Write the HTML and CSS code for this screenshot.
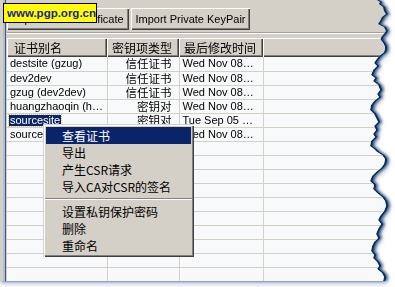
FILE: index.html
```html
<!DOCTYPE html>
<html lang="zh-CN">
<head>
  <meta charset="UTF-8" />
  <title>证书管理</title>
  <link rel="stylesheet" href="styles.css">
</head>
<body>
  <div class="shot">
    <!-- torn window with shadow -->
    <div class="frame">
      <div class="window">
        <div class="side"></div>
        <div class="main">
          <div class="toolbar">
            <button class="btn btn-trust">Import Trust Certificate</button>
            <button class="btn btn-pair">Import Private KeyPair</button>
          </div>
          <div class="sep"></div>
          <div class="list">
            <table class="grid">
              <colgroup>
                <col class="c-alias">
                <col class="c-type">
                <col class="c-date">
                <col class="c-rest">
              </colgroup>
              <thead>
                <tr>
                  <th>证书别名</th>
                  <th>密钥项类型</th>
                  <th>最后修改时间</th>
                  <th></th>
                </tr>
              </thead>
              <tbody>
                <tr><td>destsite (gzug)</td><td class="zh">信任证书</td><td>Wed Nov 08…</td><td></td></tr>
                <tr><td>dev2dev</td><td class="zh">信任证书</td><td>Wed Nov 08…</td><td></td></tr>
                <tr><td>gzug (dev2dev)</td><td class="zh">信任证书</td><td>Wed Nov 08…</td><td></td></tr>
                <tr><td>huangzhaoqin (h…</td><td class="zh">密钥对</td><td>Wed Nov 08…</td><td></td></tr>
                <tr><td><span class="picked">sourcesite</span></td><td class="zh">密钥对</td><td>Tue Sep 05 …</td><td></td></tr>
                <tr><td>sourcesite2</td><td class="zh">密钥对</td><td>Wed Nov 08…</td><td></td></tr>
                <tr><td></td><td></td><td></td><td></td></tr>
                <tr><td></td><td></td><td></td><td></td></tr>
                <tr><td></td><td></td><td></td><td></td></tr>
                <tr><td></td><td></td><td></td><td></td></tr>
                <tr><td></td><td></td><td></td><td></td></tr>
                <tr><td></td><td></td><td></td><td></td></tr>
                <tr><td></td><td></td><td></td><td></td></tr>
                <tr><td></td><td></td><td></td><td></td></tr>
                <tr><td></td><td></td><td></td><td></td></tr>
                <tr><td></td><td></td><td></td><td></td></tr>
              </tbody>
            </table>
          </div>
        </div>
      </div>
    </div>

    <!-- watermark -->
    <div class="stamp">www.pgp.org.cn</div>

    <!-- context menu -->
    <ul class="menu">
      <li class="active">查看证书</li>
      <li>导出</li>
      <li>产生CSR请求</li>
      <li>导入CA对CSR的签名</li>
      <li class="divider"></li>
      <li>设置私钥保护密码</li>
      <li>删除</li>
      <li>重命名</li>
    </ul>
  </div>
</body>
</html>
```

FILE: styles.css
```css
* {
  margin: 0;
  padding: 0;
  box-sizing: border-box;
}
html, body {
  width: 100%;
  height: 100%;
  background: #fff;
}
body {
  font-family: 'Liberation Sans', 'Noto Sans CJK SC', sans-serif;
  font-size: 11px;
  color: #000;
}
.shot {
  position: relative;
  width: 395px;
  height: 287px;
  overflow: hidden;
  background: #fff;
}
.frame {
  width: 392px;
  height: 281px;
  filter: drop-shadow(2px 0 0.6px #08305f) drop-shadow(2px 0 1.5px rgba(15, 55, 105, 0.8)) drop-shadow(0 3px 2px rgba(140, 155, 185, 0.5));
}
.window {
  display: flex;
  width: 392px;
  height: 281px;
  background: #d4d0c8;
  clip-path: polygon(0 0, 377px 0, 380px 2px, 379px 4px, 383px 7px, 384px 11px, 386px 14px, 382px 17px, 380px 21px, 378px 24px, 384px 27px, 386px 31px, 383px 35px, 380px 39px, 383px 43px, 385px 47px, 384px 52px, 379px 56px, 376px 60px, 374px 63px, 377px 66px, 373px 70px, 371px 75px, 375px 78px, 373px 81px, 378px 85px, 380px 90px, 377px 94px, 379px 97px, 374px 101px, 371px 105px, 370px 110px, 374px 114px, 376px 118px, 378px 122px, 374px 126px, 376px 130px, 373px 134px, 375px 137px, 371px 141px, 370px 146px, 374px 149px, 377px 152px, 382px 155px, 385px 159px, 384px 164px, 381px 168px, 376px 172px, 372px 176px, 370px 181px, 374px 185px, 373px 189px, 377px 193px, 382px 197px, 385px 201px, 386px 206px, 384px 211px, 380px 216px, 378px 220px, 381px 224px, 378px 229px, 376px 234px, 378px 238px, 374px 242px, 372px 246px, 371px 251px, 374px 255px, 373px 258px, 377px 262px, 379px 266px, 377px 269px, 382px 273px, 384px 277px, 383px 281px, 0 281px);
}
.side {
  width: 7px;
  flex-shrink: 0;
  background: linear-gradient(to right, #d4d0c8 0 3px, #a9c0e0 3px 5px, #4a5468 5px 6px, #d4d0c8 6px);
}
.main {
  flex: 1;
  display: flex;
  flex-direction: column;
  min-width: 0;
}
.toolbar {
  display: flex;
  gap: 2px;
  padding-top: 8px;
}
.btn {
  height: 22px;
  padding: 0 3px;
  font-family: 'Liberation Sans', sans-serif;
  font-size: 11px;
  white-space: nowrap;
  color: #000;
  background: #d4d0c8;
  border: none;
  box-shadow: inset 1px 1px #fff, inset -1px -1px #404040, inset -2px -2px #808080;
}
.btn-trust {
  width: 122px;
}
.btn-pair {
  width: 119px;
}
.sep {
  margin-top: 2px;
  border-top: 1px solid #a0a0a0;
  border-bottom: 1px solid #fff;
}
.list {
  flex: 1;
  margin-top: 4px;
  overflow: hidden;
  background: #f8f9fb;
}
.grid {
  border-collapse: collapse;
  table-layout: fixed;
  width: 390px;
}
.c-alias { width: 100px; }
.c-type { width: 72px; }
.c-date { width: 84px; }
.c-rest { width: 134px; }
.grid th {
  height: 19px;
  padding: 0 5px;
  font-family: 'Noto Sans CJK SC', sans-serif;
  font-size: 12px;
  font-weight: normal;
  line-height: 17px;
  text-align: left;
  white-space: nowrap;
  overflow: hidden;
  background: #d4d0c8;
  box-shadow: inset 1px 1px #fff, inset -1px -1px #404040, inset -2px -2px #808080;
}
.grid th:nth-child(1) {
  padding-left: 7px;
}
.grid td {
  height: 14px;
  padding: 0 3px;
  line-height: 13px;
  white-space: nowrap;
  overflow: hidden;
  border-bottom: 1px solid #d4d0c8;
  border-right: 1px solid #d4d0c8;
}
.grid td:nth-child(2) {
  text-align: right;
  padding-right: 7px;
}
.grid td.zh {
  font-family: 'Noto Sans CJK SC', sans-serif;
  font-size: 11.5px;
}
.picked {
  display: inline-block;
  margin-left: -1px;
  padding: 0 1px;
  line-height: 11px;
  color: #fff;
  background: #0a246a;
  outline: 1px dotted #d8c870;
}
.stamp {
  position: absolute;
  top: 3px;
  left: 3px;
  width: 94px;
  height: 20px;
  padding-left: 3px;
  font-family: 'Liberation Sans', sans-serif;
  font-size: 11.5px;
  font-weight: bold;
  line-height: 18px;
  white-space: nowrap;
  color: #1a1aa6;
  background: #ffff00;
  border: 1px solid #000;
}
.menu {
  position: absolute;
  top: 124px;
  left: 43px;
  width: 151px;
  padding: 3px;
  list-style: none;
  font-family: 'Noto Sans CJK SC', sans-serif;
  font-size: 12px;
  background: #d4d0c8;
  box-shadow: inset 1px 1px #d4d0c8, inset 2px 2px #fff, inset -1px -1px #404040, inset -2px -2px #808080;
}
.menu li {
  height: 17px;
  padding-left: 16px;
  line-height: 17px;
}
.menu li.active {
  color: #fff;
  background: #0a246a;
}
.menu li.divider {
  height: 8px;
  margin: 0 -1px;
  background: linear-gradient(#d4d0c8 0 3px, #808080 3px 4px, #fff 4px 5px, #d4d0c8 5px);
}
```
